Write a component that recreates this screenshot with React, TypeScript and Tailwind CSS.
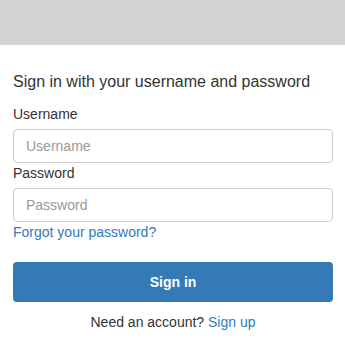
export default function App() {
    return (
        <div className="w-[345px] h-[353px] bg-white font-['Liberation_Sans',Arial,sans-serif] text-[#333]">
            <div className="h-[45px] bg-[#d3d3d3]" />
            <div className="pl-[13px] pr-[12px] pt-[27px]">
                <h4 className="text-[16px] leading-[20px] mb-[12px]">Sign in with your username and password</h4>
                <label className="block text-[14px] leading-[20px] mb-[5px]">Username</label>
                <input
                    className="block w-full h-[34px] px-[12px] text-[14px] border border-[#ccc] rounded-[4px] placeholder:text-[#999] outline-none"
                    placeholder="Username"
                />
                <label className="block text-[14px] leading-[20px] mb-[5px]">Password</label>
                <input
                    type="password"
                    className="block w-full h-[34px] px-[12px] text-[14px] border border-[#ccc] rounded-[4px] placeholder:text-[#999] outline-none"
                    placeholder="Password"
                />
                <a className="block text-[14px] leading-[20px] text-[#337ab7]">Forgot your password?</a>
                <button className="block w-full h-[40px] mt-[20px] bg-[#337ab7] text-white font-bold text-[14px] rounded-[4px]">
                    Sign in
                </button>
                <p className="text-center text-[14px] leading-[20px] mt-[10px]">
                    Need an account? <a className="text-[#337ab7]">Sign up</a>
                </p>
            </div>
        </div>
    )
}
